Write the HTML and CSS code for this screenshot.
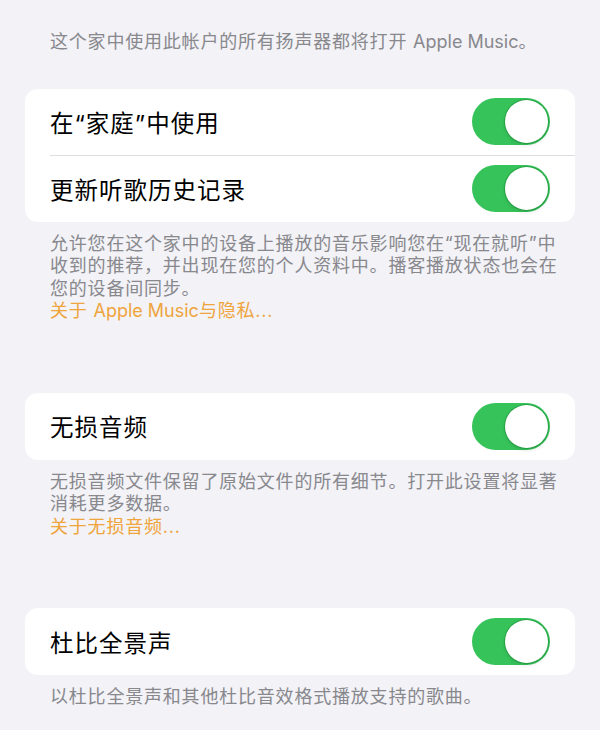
FILE: index.html
```html
<!DOCTYPE html>
<html lang="zh-CN">
<head>
  <meta charset="UTF-8" />
  <meta name="viewport" content="width=device-width, initial-scale=1" />
  <title>音乐</title>
  <link rel="stylesheet" href="styles.css">
</head>
<body>
  <main class="settings">
    <p class="note topNote">这个家中使用此帐户的所有扬声器都将打开 <span class="latin">Apple Music</span>。</p>

    <section class="group">
      <div class="card">
        <div class="row">
          <span class="label">在“家庭”中使用</span>
          <span class="switch on"><span class="knob"></span></span>
        </div>
        <div class="row">
          <span class="label">更新听歌历史记录</span>
          <span class="switch on"><span class="knob"></span></span>
        </div>
      </div>
      <p class="note">允许您在这个家中的设备上播放的音乐影响您在“现在就听”中收到的推荐，并出现在您的个人资料中。播客播放状态也会在您的设备间同步。<br><a href="#">关于 <span class="latin">Apple Music</span>与隐私...</a></p>
    </section>

    <section class="group">
      <div class="card">
        <div class="row">
          <span class="label">无损音频</span>
          <span class="switch on"><span class="knob"></span></span>
        </div>
      </div>
      <p class="note">无损音频文件保留了原始文件的所有细节。打开此设置将显著消耗更多数据。<br><a href="#">关于无损音频...</a></p>
    </section>

    <section class="group">
      <div class="card">
        <div class="row">
          <span class="label">杜比全景声</span>
          <span class="switch on"><span class="knob"></span></span>
        </div>
      </div>
      <p class="note">以杜比全景声和其他杜比音效格式播放支持的歌曲。</p>
    </section>
  </main>
</body>
</html>
```

FILE: styles.css
```css
/* iOS grouped settings look */
body {
  margin: 0;
  background: #f2f2f7;
  color: #000;
  font-family: "Inter", "Noto Sans CJK SC", sans-serif;
}
.settings {
  padding: 31px 25px 0;
}
.note {
  margin: 0;
  padding-left: 25px;
  width: 515px;
  font-size: 18px;
  letter-spacing: 0.8px;
  line-height: 22.5px;
  color: #88888d;
}
.note .latin {
  letter-spacing: 0;
}
.note a {
  color: #efa43c;
  text-decoration: none;
}
.topNote {
  margin-bottom: 35px;
}
.group + .group {
  margin-top: 70px;
}
.card {
  background: #fff;
  border-radius: 13px;
  margin-bottom: 11px;
}
.row {
  display: flex;
  align-items: center;
  justify-content: space-between;
  height: 67px;
  padding: 0 25px;
  box-sizing: border-box;
}
.row + .row {
  border-top: 1px solid #dedee2;
  margin-left: 25px;
  padding-left: 0;
}
.card .row:first-child:not(:last-child) {
  height: 66px;
}
.label {
  font-size: 23.5px;
  letter-spacing: 1px;
}
.switch {
  display: flex;
  justify-content: flex-start;
  width: 78px;
  height: 47px;
  padding: 2px;
  box-sizing: border-box;
  border-radius: 24px;
  background: #e4e4e8;
}
.switch.on {
  justify-content: flex-end;
  background: #36c35a;
}
.knob {
  width: 43px;
  height: 43px;
  border-radius: 50%;
  background: #fff;
  box-shadow: 0 0 0 1px rgba(0, 90, 20, 0.25), 0 2px 4px rgba(0, 0, 0, 0.12);
}
```
